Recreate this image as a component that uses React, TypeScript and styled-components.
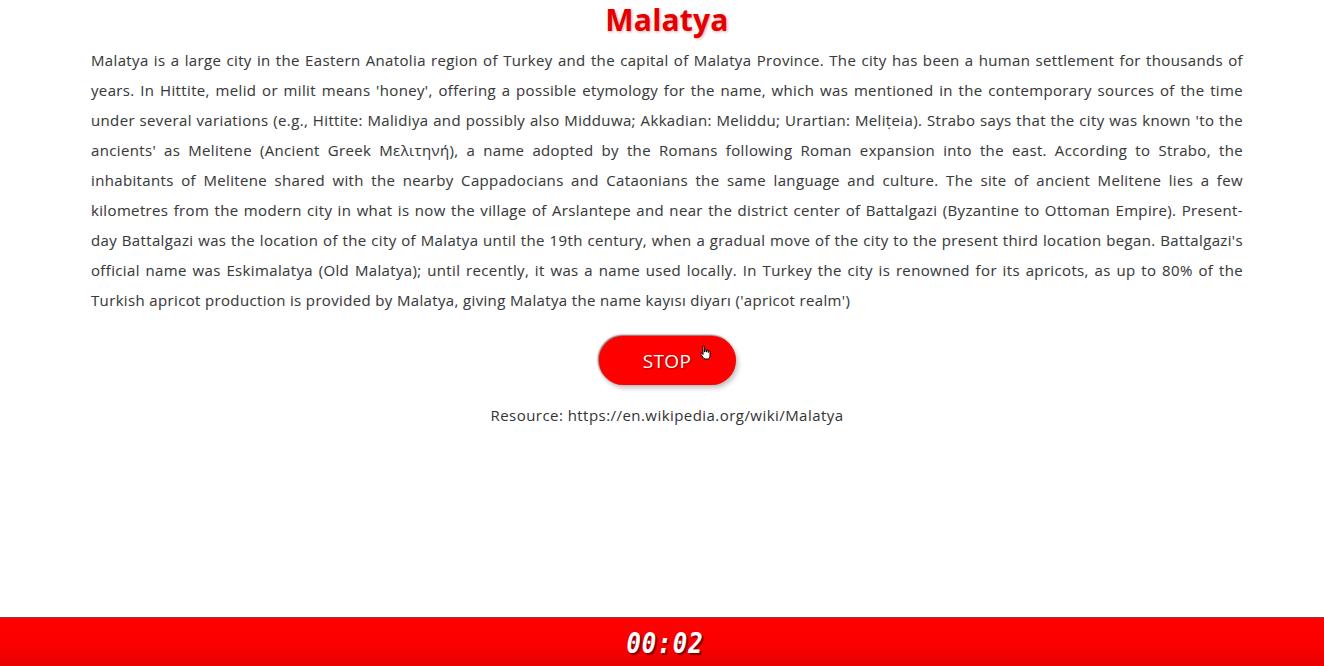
import React from "react";
import styled, { createGlobalStyle } from "styled-components";

const Global = createGlobalStyle`
  html, body { margin: 0; padding: 0; background: #fff; }
  body { font-family: "Open Sans", "Liberation Sans", sans-serif; }
`;

const Page = styled.main`
  min-height: 666px;
  display: flex;
  flex-direction: column;
  align-items: center;
  padding: 0 81px 0 91px;
  box-sizing: border-box;
`;

const Title = styled.h1`
  margin: 0;
  padding-top: 2px;
  font-family: "Open Sans", "Liberation Sans", sans-serif;
  font-weight: 700;
  font-size: 30px;
  line-height: 36px;
  color: #e40000;
  text-shadow: 1px 1px 3px rgba(150, 0, 0, 0.35);
  letter-spacing: 0.2px;
`;

const Body = styled.p`
  margin: 7px 0 0 0;
  width: 1152px;
  font-size: 15px;
  line-height: 30px;
  color: #3a3a3a;
  text-align: justify;
  text-shadow: 1px 1px 1px rgba(255, 255, 255, 0.9), 0 0 1px rgba(0, 0, 0, 0.15);
  letter-spacing: 0.35px;
`;

const StopButton = styled.button`
  position: relative;
  margin-top: 21px;
  width: 137px;
  height: 49px;
  border: none;
  border-radius: 25px;
  background: #ff0000;
  color: #fff;
  font-family: "Open Sans", "Liberation Sans", sans-serif;
  font-size: 19px;
  letter-spacing: 0.3px;
  text-shadow: 1px 1px 2px rgba(90, 0, 0, 0.6);
  box-shadow: -1px -1px 2px rgba(90, 0, 0, 0.7), 2px 3px 5px rgba(0, 0, 0, 0.25);
  cursor: pointer;
`;

const Cursor = styled.span`
  position: absolute;
  left: 100px;
  top: 9px;
  color: #000;
  display: flex;
`;

const Resource = styled.p`
  margin: 20px 0 0 0;
  font-size: 15px;
  color: #333;
  letter-spacing: 0.45px;
  text-shadow: 1px 1px 1px rgba(255, 255, 255, 0.9);
`;

const Footer = styled.footer`
  position: fixed;
  left: 0;
  right: 0;
  bottom: 0;
  height: 48px;
  border-top: 1px solid #8a3a3a;
  background: linear-gradient(to bottom, #ff0000 0%, #fa0000 60%, #e60000 100%);
  display: flex;
  align-items: center;
  justify-content: center;
`;

const Timer = styled.span`
  display: inline-block;
  font-family: "DejaVu Sans Mono", "Liberation Mono", monospace;
  font-weight: 700;
  font-style: italic;
  font-size: 24px;
  letter-spacing: 1px;
  color: #fff;
  text-shadow: 2px 2px 1px rgba(100, 0, 0, 0.8);
  transform: scaleY(1.2);
  margin: 2px 0 0 6px;
`;

const HandIcon = () => (
  <svg width="14" height="16" viewBox="0 0 14 16">
    <path
      d="M4 1.5c0-.8 1.6-.8 1.6 0V7h.3V5.2c0-.8 1.5-.8 1.5 0V7h.3V5.8c0-.8 1.5-.8 1.5 0V7.4h.3V6.6c0-.8 1.5-.8 1.5 0v4.2c0 1.7-1 3.2-2.6 3.2H6.3c-1 0-1.7-.6-2.2-1.4L1.8 9.3c-.5-.8.6-1.5 1.2-.8L4 9.6z"
      fill="#fff"
      stroke="#000"
      strokeWidth="1"
    />
  </svg>
);

const text =
  "Malatya is a large city in the Eastern Anatolia region of Turkey and the capital of Malatya Province. The city has been a human settlement for thousands of years. In Hittite, melid or milit means 'honey', offering a possible etymology for the name, which was mentioned in the contemporary sources of the time under several variations (e.g., Hittite: Malidiya and possibly also Midduwa; Akkadian: Meliddu; Urartian: Meliṭeia). Strabo says that the city was known 'to the ancients' as Melitene (Ancient Greek Μελιτηνή), a name adopted by the Romans following Roman expansion into the east. According to Strabo, the inhabitants of Melitene shared with the nearby Cappadocians and Cataonians the same language and culture. The site of ancient Melitene lies a few kilometres from the modern city in what is now the village of Arslantepe and near the district center of Battalgazi (Byzantine to Ottoman Empire). Present-day Battalgazi was the location of the city of Malatya until the 19th century, when a gradual move of the city to the present third location began. Battalgazi's official name was Eskimalatya (Old Malatya); until recently, it was a name used locally. In Turkey the city is renowned for its apricots, as up to 80% of the Turkish apricot production is provided by Malatya, giving Malatya the name kayısı diyarı ('apricot realm')";

export default function App() {
  return (
    <>
      <Global />
      <Page>
        <Title>Malatya</Title>
        <Body>{text}</Body>
        <StopButton>
          STOP
          <Cursor>
            <HandIcon />
          </Cursor>
        </StopButton>
        <Resource>Resource: https://en.wikipedia.org/wiki/Malatya</Resource>
      </Page>
      <Footer>
        <Timer>00:02</Timer>
      </Footer>
    </>
  );
}
